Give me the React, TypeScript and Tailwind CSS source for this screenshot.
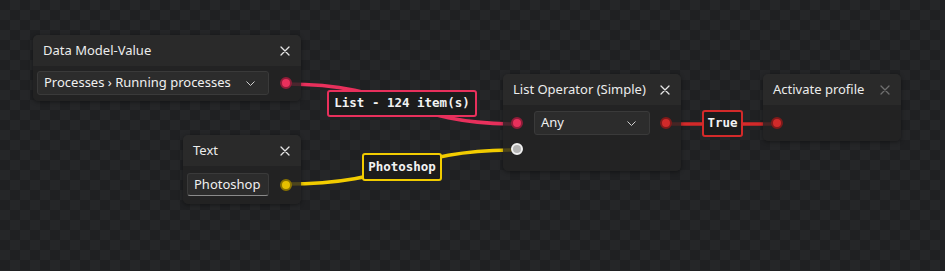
import React from "react";

const font = "font-['Noto_Sans','Open_Sans',sans-serif]";

function XIcon({ dim }: { dim?: boolean }) {
  return (
    <svg width="10" height="10" viewBox="0 0 10 10" className={dim ? "text-[#6f6f6f]" : "text-[#e6e6e6]"}>
      <path d="M1 1L9 9M9 1L1 9" stroke="currentColor" strokeWidth="1.3" strokeLinecap="round" />
    </svg>
  );
}

function Chevron() {
  return (
    <svg width="9" height="5" viewBox="0 0 9 5" className="text-[#cfcfcf]">
      <path d="M0.5 0.5L4.5 4.5L8.5 0.5" stroke="currentColor" strokeWidth="1" fill="none" />
    </svg>
  );
}

function Dot({ kind }: { kind: "pink" | "yellow" | "white" | "red" }) {
  const cls = {
    pink: "bg-[#e8305c] border-[#8e1c38]",
    yellow: "bg-[#e6c000] border-[#8a7300]",
    white: "bg-[#b4b4b4] border-[#f0f0f0]",
    red: "bg-[#d02a2a] border-[#7e1a1a]",
  }[kind];
  return <div className={`w-[12px] h-[12px] rounded-full border-2 ${cls}`} />;
}

function Header({ title, dim }: { title: string; dim?: boolean }) {
  return (
    <div className="h-[31px] bg-[#2a2a2a]/[0.92] flex items-center justify-between pl-[10px] pr-[11px] pt-[1px]">
      <span className="text-[13px] text-[#ececec]">{title}</span>
      <XIcon dim={dim} />
    </div>
  );
}

export default function App() {
  return (
    <div
      className={`relative w-[945px] h-[271px] overflow-hidden ${font} bg-[#1f2022] bg-[conic-gradient(#252628_25%,#1f2022_0_50%,#252628_0_75%,#1f2022_0)] bg-[length:20px_20px]`}
    >
      {/* edges (under nodes) */}
      <svg className="absolute inset-0" width="945" height="271">
        <path d="M286 84 C401.5 84 401.5 124 517 124" stroke="#e8305c" strokeWidth="3.5" fill="none" />
        <path d="M286 184 C401.5 184 401.5 150 517 150" stroke="#f2cc00" strokeWidth="3.5" fill="none" />
        <path d="M666 124 L777 124" stroke="#d42a2a" strokeWidth="3.5" fill="none" />
      </svg>

      {/* Data Model-Value */}
      <div className="absolute left-[33px] top-[35px] w-[268px] rounded-[5px] overflow-hidden shadow-[0_1px_4px_rgba(0,0,0,0.4)]">
        <Header title="Data Model-Value" />
        <div className="bg-[#232323]/[0.8] flex items-center pl-[4px] pt-[5px] pb-[6px]">
          <div className="w-[232px] h-[24px] rounded-[3px] bg-[#2c2c2c] border border-[#3a3a3a] flex items-center justify-between pl-[6px] pr-[13px]">
            <span className="text-[13px] text-[#f0f0f0]">Processes › Running processes</span>
            <Chevron />
          </div>
          <div className="ml-[11px]">
            <Dot kind="pink" />
          </div>
        </div>
      </div>

      {/* Text */}
      <div className="absolute left-[183px] top-[135px] w-[118px] rounded-[5px] overflow-hidden shadow-[0_1px_4px_rgba(0,0,0,0.4)]">
        <Header title="Text" />
        <div className="bg-[#232323]/[0.8] flex items-center pl-[4px] pt-[7px] pb-[8px]">
          <div className="w-[82px] h-[23px] rounded-[3px] bg-[#2c2c2c] border border-[#3a3a3a] border-b-[#8a8a8a] flex items-center pl-[6px]">
            <span className="text-[13px] text-[#f0f0f0]">Photoshop</span>
          </div>
          <div className="ml-[11px]">
            <Dot kind="yellow" />
          </div>
        </div>
      </div>

      {/* List Operator */}
      <div className="absolute left-[503px] top-[74px] w-[178px] rounded-[5px] overflow-hidden shadow-[0_1px_4px_rgba(0,0,0,0.4)]">
        <Header title="List Operator (Simple)" />
        <div className="bg-[#232323]/[0.8] flex flex-col pt-[6px] pb-[16px]">
          <div className="flex items-center pl-[8px]">
            <Dot kind="pink" />
            <div className="ml-[11px] w-[116px] h-[24px] rounded-[3px] bg-[#2c2c2c] border border-[#3a3a3a] flex items-center justify-between pl-[6px] pr-[13px]">
              <span className="text-[13px] text-[#f0f0f0]">Any</span>
              <Chevron />
            </div>
            <div className="ml-[10px]">
              <Dot kind="red" />
            </div>
          </div>
          <div className="flex items-center pl-[8px] mt-[8px]">
            <Dot kind="white" />
          </div>
        </div>
      </div>

      {/* Activate profile */}
      <div className="absolute left-[763px] top-[74px] w-[138px] rounded-[5px] overflow-hidden shadow-[0_1px_4px_rgba(0,0,0,0.4)]">
        <Header title="Activate profile" dim />
        <div className="bg-[#232323]/[0.8] h-[36px] flex items-center pl-[8px]">
          <Dot kind="red" />
        </div>
      </div>

      {/* edge labels */}
      <div className="absolute left-[327px] top-[90px] w-[150px] h-[27px] rounded-[3px] border-2 border-[#e8305c] bg-[#1c1c1c] flex items-center justify-center font-['DejaVu_Sans_Mono',monospace] font-bold text-[12.5px] text-[#f2f2f2]">
        List - 124 item(s)
      </div>
      <div className="absolute left-[362px] top-[153px] w-[80px] h-[28px] rounded-[3px] border-2 border-[#f2cc00] bg-[#1c1c1c] flex items-center justify-center font-['DejaVu_Sans_Mono',monospace] font-bold text-[12.5px] text-[#f2f2f2]">
        Photoshop
      </div>
      <div className="absolute left-[702px] top-[110px] w-[41px] h-[27px] rounded-[3px] border-2 border-[#d42a2a] bg-[#1c1c1c] flex items-center justify-center font-['DejaVu_Sans_Mono',monospace] font-bold text-[12.5px] text-[#f2f2f2]">
        True
      </div>
    </div>
  );
}
